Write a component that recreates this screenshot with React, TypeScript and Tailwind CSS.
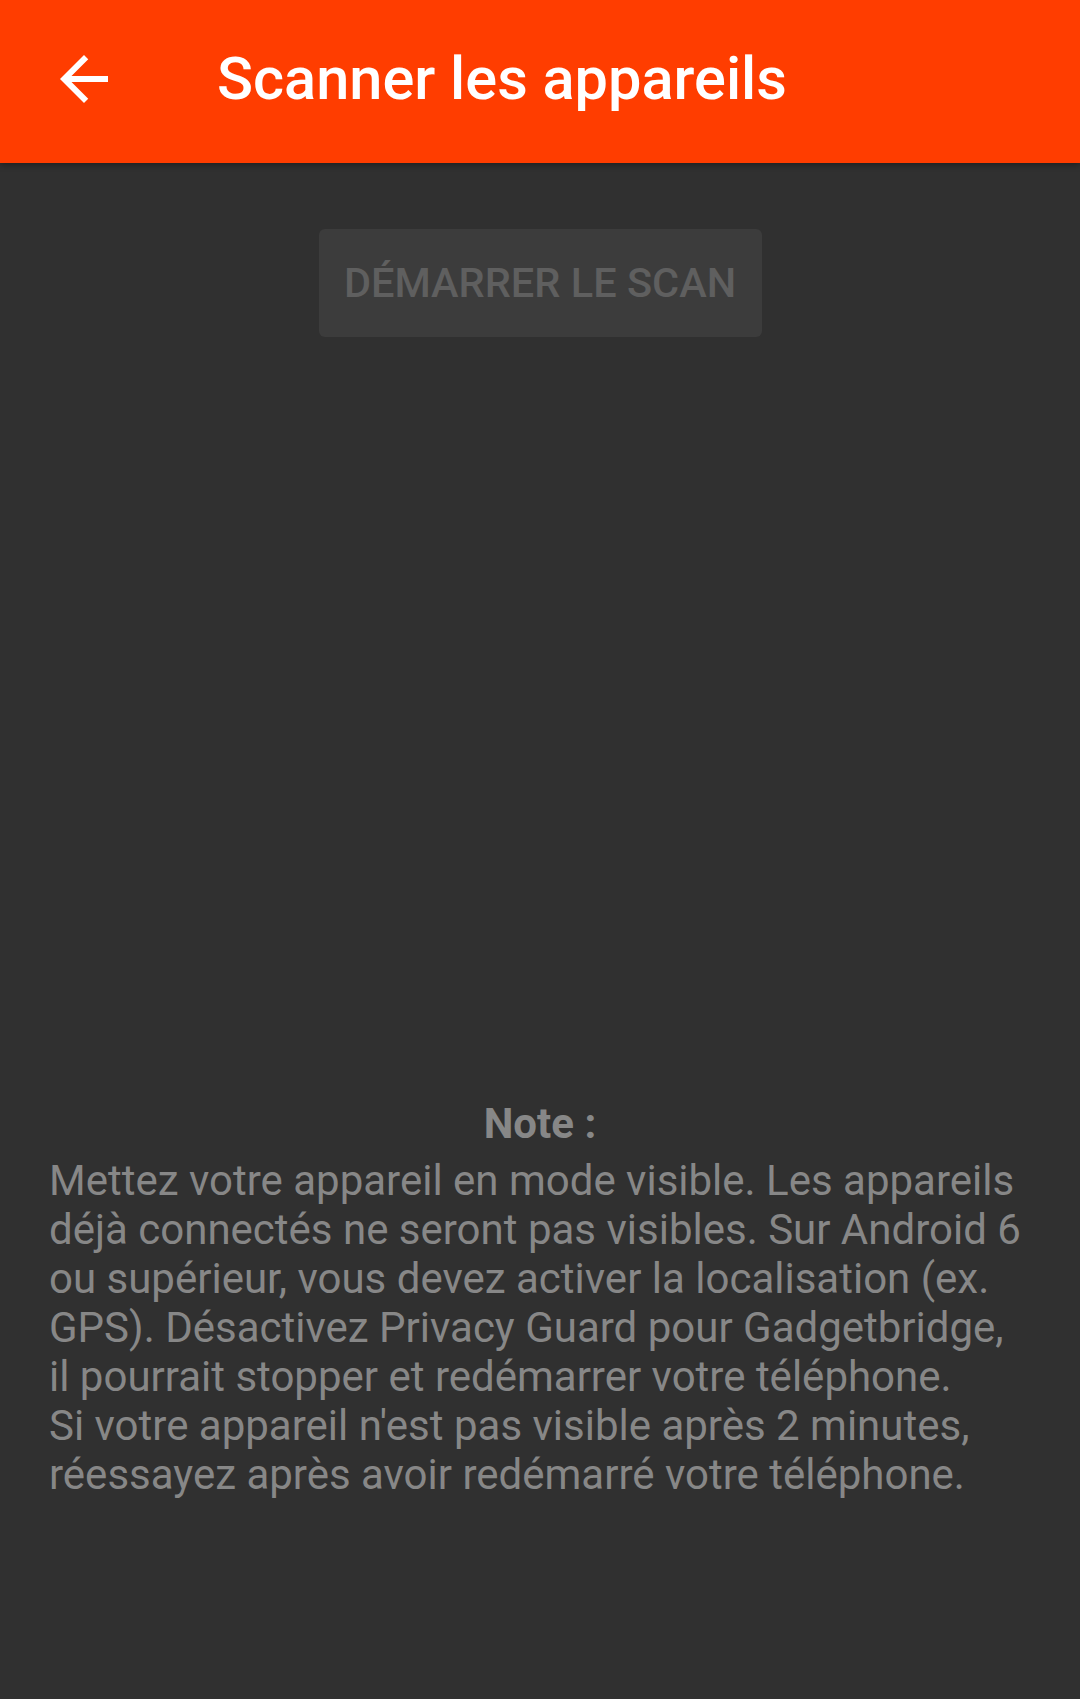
import React from 'react'

const BackArrow = () => (
  <svg viewBox="0 0 24 24" className="w-[72px] h-[72px]" fill="#ffffff">
    <path d="M20 11H7.83l5.59-5.59L12 4l-8 8 8 8 1.41-1.41L7.83 13H20v-2z" />
  </svg>
)

export default function App() {
  return (
    <div
      className="w-[1080px] h-[1699px] bg-[#303030] flex flex-col overflow-hidden"
      style={{ fontFamily: 'Roboto, "Noto Sans", sans-serif' }}
    >
      {/* Toolbar */}
      <div className="h-[163px] bg-[#ff3d00] flex items-center shadow-[0_2px_6px_rgba(0,0,0,0.35)] relative z-10 shrink-0">
        <div className="ml-[48px] mt-[-5px]">
          <BackArrow />
        </div>
        <h1 className="ml-[97px] mt-[-3px] text-[59.5px] font-medium text-white leading-none">
          Scanner les appareils
        </h1>
      </div>

      {/* Scan button */}
      <div className="flex justify-center mt-[66px] shrink-0">
        <button className="w-[443px] h-[108px] rounded-[6px] bg-[#3c3c3c] text-[#5f5f5f] text-[41.5px] font-medium uppercase">
          Démarrer le scan
        </button>
      </div>

      {/* Device list (empty) */}
      <div className="flex-1" />

      {/* Note */}
      <div className="px-[49px] pb-[200px] shrink-0 text-[#878787]">
        <p className="text-center font-bold text-[42px] leading-[49px] mb-[8px]">Note :</p>
        <p className="text-[42px] leading-[49px] whitespace-pre-line">
          {"Mettez votre appareil en mode visible. Les appareils déjà connectés ne seront pas visibles. Sur Android 6 ou supérieur, vous devez activer la localisation (ex. GPS). Désactivez Privacy Guard pour Gadgetbridge, il pourrait stopper et redémarrer votre téléphone.\nSi votre appareil n'est pas visible après 2 minutes, réessayez après avoir redémarré votre téléphone."}
        </p>
      </div>
    </div>
  )
}
